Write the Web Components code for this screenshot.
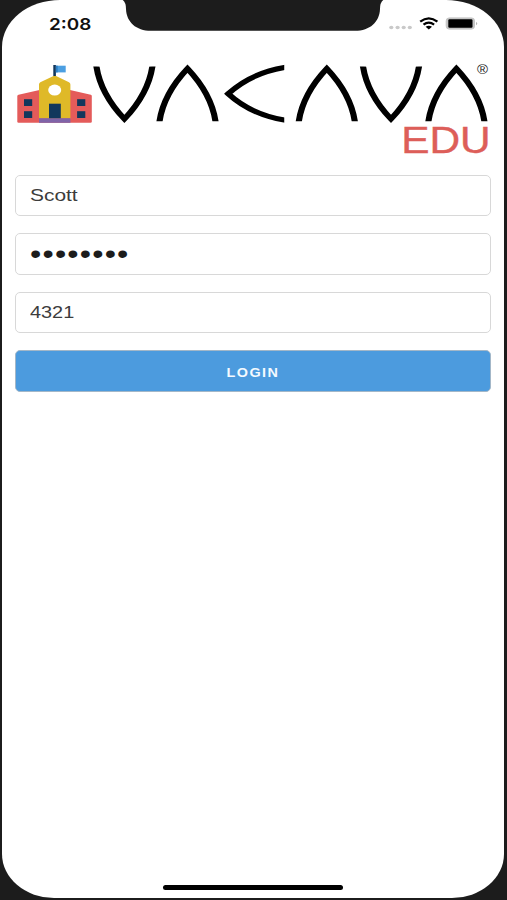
<!DOCTYPE html>
<html lang="en">
<head>
<meta charset="utf-8">
<title>Vacava EDU</title>
<style>
    html, body {
        margin: 0;
        height: 100%;
        background: #1c1c1c;
        font-family: "Liberation Sans", Arial, sans-serif;
        overflow: hidden;
    }
</style>
</head>
<body>
<phone-screen>
    <status-bar slot="status" time="2:08"></status-bar>
    <brand-logo suffix="EDU"></brand-logo>
    <login-form>
        <form-field>Scott</form-field>
        <form-field secret>••••••••</form-field>
        <form-field numeric>4321</form-field>
        <action-button>LOGIN</action-button>
    </login-form>
</phone-screen>

<script>
class PhoneScreen extends HTMLElement {
    constructor() {
        super();
        this.attachShadow({ mode: 'open' }).innerHTML = `
            <style>
                :host {
                    display: flex;
                    box-sizing: border-box;
                    width: 507px;
                    height: 900px;
                    padding: 0 3px 2px 2px;
                    background: #1c1c1c;
                }
                .screen {
                    flex: 1;
                    display: flex;
                    flex-direction: column;
                    background: #fff;
                    border-radius: 58px 58px 52px 52px / 47px 47px 44px 44px;
                    overflow: hidden;
                }
                main { flex: 1; padding: 0 13px; }
                .home {
                    align-self: center;
                    width: 180px;
                    height: 5px;
                    margin-bottom: 8.5px;
                    border-radius: 3px;
                    background: #000;
                }
            </style>
            <div class="screen">
                <slot name="status"></slot>
                <main><slot></slot></main>
                <div class="home"></div>
            </div>
        `;
    }
}

class StatusBar extends HTMLElement {
    constructor() {
        super();
        this.attachShadow({ mode: 'open' });
    }

    connectedCallback() {
        this.shadowRoot.innerHTML = `
            <style>
                :host {
                    display: grid;
                    grid-template-columns: 124px 254px 124px;
                    height: 62px;
                }
                .time {
                    margin: 13.500px 0 0 47px;
                    font: 600 16px/20px Inter, sans-serif;
                    color: #111;
                    transform: scaleX(1.18);
                    transform-origin: 0 0;
                    white-space: nowrap;
                    justify-self: start;
                }
                svg { display: block; overflow: visible; }
            </style>
            <span class="time"></span>
            <svg width="254" height="32">
                <path fill="#1c1c1c" d="M-5 -1 Q0 1 0 9 C0.500 22 10 30.800 25 30.800 H229 C244 30.800 253.500 22 254 9 Q254 1 259 -1 Z"/>
            </svg>
            <svg width="124" height="40">
                <g fill="#c9c9c9">
                    <ellipse cx="11.300" cy="27.500" rx="2.100" ry="1.800"/>
                    <ellipse cx="17.600" cy="27.500" rx="2.100" ry="1.800"/>
                    <ellipse cx="23.700" cy="27.500" rx="2.100" ry="1.800"/>
                    <ellipse cx="29.800" cy="27.500" rx="2.100" ry="1.800"/>
                </g>
                <g fill="none" stroke="#000" stroke-width="2.300">
                    <path d="M40.200 21.700 Q48.800 15 57.400 21.700"/>
                    <path d="M43.500 24.700 Q48.800 20.600 54.100 24.700"/>
                </g>
                <path d="M45.600 26.700 Q48.800 24.700 52 26.700 L48.800 29.400 Z"/>
                <rect x="66.200" y="17.900" width="28.300" height="11.200" rx="3" fill="#c4c4c4" stroke="#c4c4c4" stroke-width="1"/>
                <rect x="68.300" y="19.300" width="24.200" height="8.400" rx="1.200"/>
                <path d="M96.100 21.700 Q98.400 23.500 96.100 25.300 Z" fill="#aaa"/>
            </svg>
        `;
        this.shadowRoot.querySelector('.time').textContent = this.getAttribute('time');
    }
}

class BrandLogo extends HTMLElement {
    constructor() {
        super();
        this.attachShadow({ mode: 'open' });
    }

    connectedCallback() {
        // Drawing units are screen pixels, viewBox starts at the logo's own corner
        this.shadowRoot.innerHTML = `
            <style>
                :host { display: block; height: 112.500px; }
                svg { display: block; overflow: visible; }
                text { font-family: "Liberation Sans", Arial, sans-serif; }
            </style>
            <svg width="476" height="94" viewBox="15 62 476 94">
                <defs>
                    <!-- flat ends for the arch legs -->
                    <clipPath id="legs"><rect x="-30" y="-52.600" width="60" height="60"/></clipPath>
                    <clipPath id="side"><rect x="-10" y="-35" width="56.700" height="70"/></clipPath>
                    <path id="arch" clip-path="url(#legs)" d="M-23.800 -57 L-23.300 -52.400 Q-19.700 -25 0 0 Q19.700 -25 23.300 -52.400 L23.800 -57"/>
                </defs>

                <!-- school building -->
                <path fill="#e45b5a" d="M18.500 94.700 L39.500 90 H70 L90.800 94.700 Q91.800 95 91.800 96 V121.500 Q91.800 122.800 90.500 122.800 H18.500 Q17.300 122.800 17.300 121.500 V96 Q17.300 95 18.500 94.700 Z"/>
                <path fill="#dfb928" d="M39 118.500 V84.500 Q39 83 40.300 82.300 L53.500 76 Q54.700 75.300 56 76 L69 82.300 Q70.400 83 70.400 84.500 V118.500 Z"/>
                <rect x="39" y="118.200" width="31.400" height="4.600" fill="#8064a8"/>
                <ellipse cx="54.700" cy="90.100" rx="6.500" ry="5.500" fill="#fff"/>
                <g fill="#12375c">
                    <rect x="49" y="103.700" width="11.800" height="14.500"/>
                    <rect x="24" y="99.200" width="8.200" height="6.800"/>
                    <rect x="24" y="111.200" width="8.200" height="6.800"/>
                    <rect x="77.100" y="99.200" width="8.200" height="6.800"/>
                    <rect x="77.100" y="111.200" width="8.200" height="6.800"/>
                    <rect x="53.300" y="65" width="2.600" height="11"/>
                </g>
                <rect x="55.900" y="65.700" width="9.800" height="6.700" fill="#4b9fe2"/>
                <rect x="55.900" y="65.700" width="1.800" height="6.700" fill="#2c7fc4"/>

                <!-- arches of the mark -->
                <g fill="none" stroke="#000" stroke-width="5.100" stroke-miterlimit="8">
                    <use href="#arch" transform="translate(124.400 119) scale(1.200 1)"/>
                    <use href="#arch" transform="translate(187.500 68.700) scale(1.200 -1)"/>
                    <path clip-path="url(#side)" transform="translate(228.200 93.800) scale(1.200 1)" d="M51 -26.900 L46.700 -26.300 Q18.500 -20.500 0 0 Q18.500 20.500 46.700 26.300 L51 26.900"/>
                    <use href="#arch" transform="translate(326.800 68.700) scale(1.200 -1)"/>
                    <use href="#arch" transform="translate(391 119) scale(1.200 1)"/>
                    <use href="#arch" transform="translate(456.400 68.700) scale(1.200 -1)"/>
                </g>
                <text x="477" y="73.800" font-size="12" textLength="11" lengthAdjust="spacingAndGlyphs" fill="#222">®</text>
                <text class="suffix" x="401.200" y="152.700" font-size="37" textLength="89.500" lengthAdjust="spacingAndGlyphs" fill="#dd5e59" stroke="#dd5e59" stroke-width="0.400"></text>
            </svg>
        `;
        this.shadowRoot.querySelector('.suffix').textContent = this.getAttribute('suffix');
    }
}

class LoginForm extends HTMLElement {
    constructor() {
        super();
        this.attachShadow({ mode: 'open' }).innerHTML = `
            <style>
                :host { display: flex; flex-direction: column; gap: 17px; }
            </style>
            <slot></slot>
        `;
    }
}

class FormField extends HTMLElement {
    constructor() {
        super();
        this.attachShadow({ mode: 'open' }).innerHTML = `
            <style>
                :host {
                    display: flex;
                    align-items: center;
                    box-sizing: border-box;
                    height: 41.500px;
                    padding: 0 13.500px;
                    border: 1.500px solid #d8d8d8;
                    border-radius: 5px;
                    background: #fff;
                    color: #3c3c3c;
                    font-size: 17px;
                }
                span {
                    line-height: 20px;
                    padding-top: 1.500px;
                    white-space: nowrap;
                    transform: scaleX(1.23);
                    transform-origin: 0 0;
                }
                :host([numeric]) span { transform: scaleX(1.17); }
                :host([secret]) { color: #1c1c1c; padding-left: 14px; }
                :host([secret]) span {
                    font-size: 27px;
                    letter-spacing: 1px;
                    padding-top: 0;
                    transform: scaleX(1.19);
                }
            </style>
            <span><slot></slot></span>
        `;
    }
}

class ActionButton extends HTMLElement {
    constructor() {
        super();
        this.attachShadow({ mode: 'open' }).innerHTML = `
            <style>
                :host {
                    display: flex;
                    align-items: center;
                    justify-content: center;
                    box-sizing: border-box;
                    height: 41.500px;
                    border: 1px solid #a3b7c8;
                    border-radius: 5px;
                    background: #4c9bde;
                    color: #f4faff;
                    font-size: 12px;
                    font-weight: bold;
                    letter-spacing: 1.2px;
                }
                span { transform: scaleX(1.2); padding-top: 4px; }
            </style>
            <span><slot></slot></span>
        `;
    }
}

customElements.define('phone-screen', PhoneScreen);
customElements.define('status-bar', StatusBar);
customElements.define('brand-logo', BrandLogo);
customElements.define('login-form', LoginForm);
customElements.define('form-field', FormField);
customElements.define('action-button', ActionButton);
</script>
</body>
</html>
